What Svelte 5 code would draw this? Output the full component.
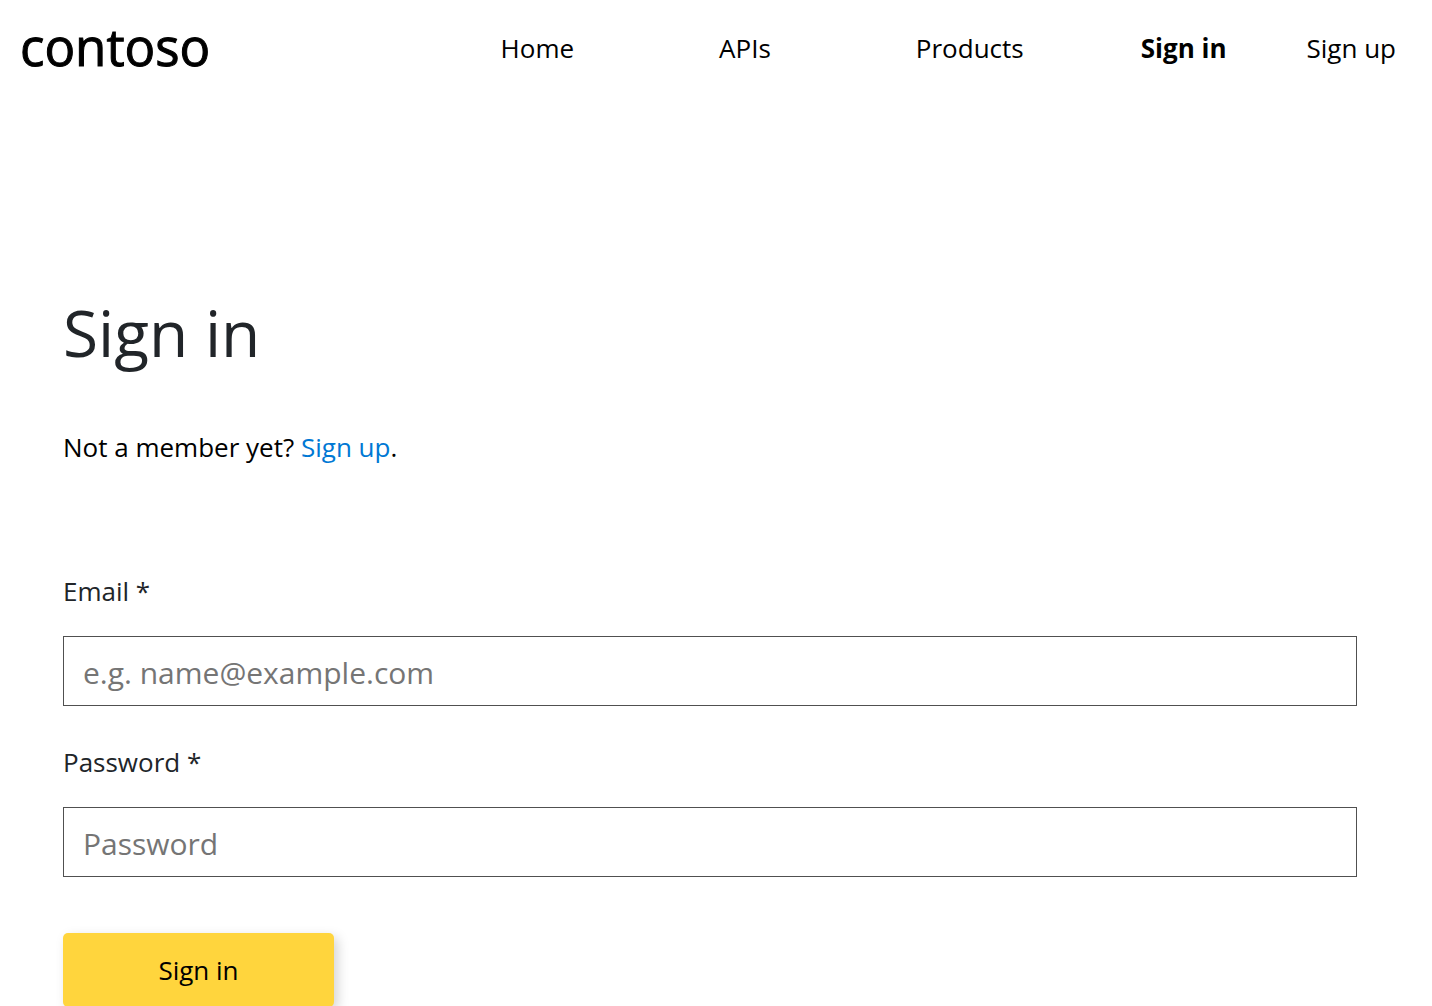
<script>
  let email = $state('');
  let password = $state('');
  const sections = ['Home', 'APIs', 'Products'];
</script>

<header>
  <a class="logo" href="#home">contoso</a>
  <nav>
    <div class="sections">
      {#each sections as section}
        <a href={'#' + section.toLowerCase()}>{section}</a>
      {/each}
    </div>
    <div class="account">
      <a class="current" href="#signin" aria-current="page">Sign in</a>
      <a href="#signup">Sign up</a>
    </div>
  </nav>
</header>

<main>
  <h1>Sign in</h1>
  <p>Not a member yet? <a href="#signup">Sign up</a>.</p>
  <form onsubmit={(e) => e.preventDefault()}>
    <div class="field">
      <label for="email">Email *</label>
      <input id="email" type="email" placeholder="e.g. name@example.com" bind:value={email} />
    </div>
    <div class="field">
      <label for="password">Password *</label>
      <input id="password" type="password" placeholder="Password" bind:value={password} />
    </div>
    <button type="submit">Sign in</button>
  </form>
</main>

<style>
  :global(html) {
    scrollbar-width: none;
  }

  :global(body) {
    margin: 0;
    background: #fff;
  }

  header,
  main {
    font-family: 'Open Sans', 'Noto Sans', sans-serif;
    font-size: 26px;
    line-height: 40px;
    color: #000;
  }

  header {
    display: flex;
    justify-content: space-between;
    align-items: flex-end;
    padding: 16px 36px 0 20px;
  }

  .logo {
    font-size: 51px;
    line-height: 60px;
    font-weight: 500;
    color: #000;
    text-decoration: none;
    -webkit-text-stroke: 1px #000;
  }

  nav {
    display: flex;
    gap: 117px;
    padding-bottom: 8px;
  }

  .sections {
    display: flex;
    gap: 145px;
  }

  .account {
    display: flex;
    gap: 80px;
  }

  nav a {
    color: #000;
    text-decoration: none;
    white-space: nowrap;
  }

  .current {
    font-weight: 700;
  }

  main {
    padding: 218px 75px 40px 63px;
  }

  h1 {
    margin: 0;
    font-size: 64px;
    line-height: 78px;
    font-weight: 400;
    color: #212529;
  }

  p {
    margin: 55px 0 104px;
  }

  p a {
    color: #0078d4;
    text-decoration: none;
  }

  form {
    display: flex;
    flex-direction: column;
    align-items: flex-start;
  }

  .field {
    display: flex;
    flex-direction: column;
    gap: 25px;
    width: 100%;
    margin-bottom: 36px;
  }

  label {
    color: #212529;
  }

  input {
    box-sizing: border-box;
    width: 100%;
    height: 70px;
    padding: 3px 19px 0;
    border: 1px solid #505050;
    border-radius: 0;
    background: #fff;
    font: inherit;
    font-size: 30px;
    color: #212529;
  }

  input::placeholder {
    color: #757575;
  }

  button {
    width: 271px;
    height: 74px;
    margin-top: 20px;
    border: 0;
    border-radius: 5px;
    background: #ffd53d;
    box-shadow: 4px 4px 12px rgba(0, 0, 0, 0.17);
    font: inherit;
    color: #000;
    cursor: pointer;
  }
</style>
